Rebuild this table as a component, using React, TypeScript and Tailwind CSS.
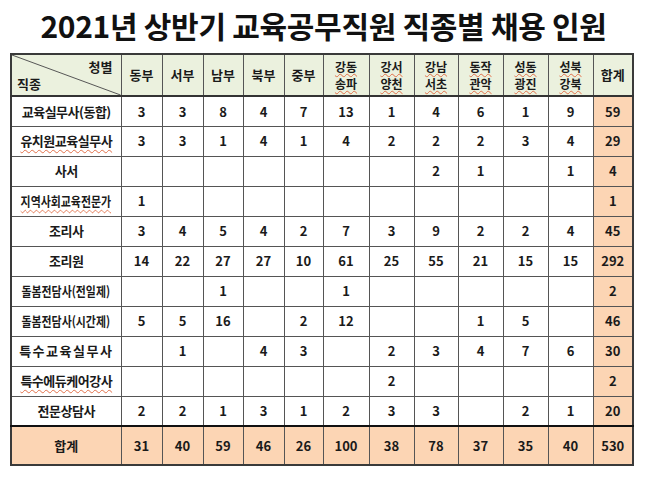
import React from "react";

const cols: string[][] = [
  ["동부"],
  ["서부"],
  ["남부"],
  ["북부"],
  ["중부"],
  ["강동", "송파"],
  ["강서", "양천"],
  ["강남", "서초"],
  ["동작", "관악"],
  ["성동", "광진"],
  ["성북", "강북"],
];

const widths = [110, 41, 41, 40, 41, 39, 46, 45, 44, 45, 45, 45, 40];

type Row = {
  label: string;
  kind: "normal" | "squiggle" | "narrow" | "narrowSquiggle" | "spaced";
  vals: (number | null)[];
  total: number;
};

const n = null;
const rows: Row[] = [
  { label: "교육실무사(동합)", kind: "normal", vals: [3, 3, 8, 4, 7, 13, 1, 4, 6, 1, 9], total: 59 },
  { label: "유치원교육실무사", kind: "squiggle", vals: [3, 3, 1, 4, 1, 4, 2, 2, 2, 3, 4], total: 29 },
  { label: "사서", kind: "normal", vals: [n, n, n, n, n, n, n, 2, 1, n, 1], total: 4 },
  { label: "지역사회교육전문가", kind: "narrowSquiggle", vals: [1, n, n, n, n, n, n, n, n, n, n], total: 1 },
  { label: "조리사", kind: "normal", vals: [3, 4, 5, 4, 2, 7, 3, 9, 2, 2, 4], total: 45 },
  { label: "조리원", kind: "normal", vals: [14, 22, 27, 27, 10, 61, 25, 55, 21, 15, 15], total: 292 },
  { label: "돌봄전담사(전일제)", kind: "narrow", vals: [n, n, 1, n, n, 1, n, n, n, n, n], total: 2 },
  { label: "돌봄전담사(시간제)", kind: "narrow", vals: [5, 5, 16, n, 2, 12, n, n, 1, 5, n], total: 46 },
  { label: "특수교육실무사", kind: "spaced", vals: [n, 1, n, 4, 3, n, 2, 3, 4, 7, 6], total: 30 },
  { label: "특수에듀케어강사", kind: "squiggle", vals: [n, n, n, n, n, n, 2, n, n, n, n], total: 2 },
  { label: "전문상담사", kind: "normal", vals: [2, 2, 1, 3, 1, 2, 3, 3, n, 2, 1], total: 20 },
];
const totals = [31, 40, 59, 46, 26, 100, 38, 78, 37, 35, 40];

const font = { fontFamily: '"Noto Sans CJK KR", "Noto Sans", sans-serif' };

function Label({ row }: { row: Row }) {
  if (row.kind === "squiggle") {
    return (
      <span className="underline decoration-wavy decoration-[#e0704a] decoration-1 underline-offset-[3px] tracking-[-0.5px]">
        {row.label}
      </span>
    );
  }
  if (row.kind === "narrowSquiggle") {
    return (
      <span className="inline-block scale-x-[0.84] whitespace-nowrap underline decoration-wavy decoration-[#e0704a] decoration-1 underline-offset-[3px]">
        {row.label}
      </span>
    );
  }
  if (row.kind === "narrow") {
    return <span className="inline-block scale-x-[0.84] whitespace-nowrap">{row.label}</span>;
  }
  if (row.kind === "spaced") {
    return <span className="tracking-[1.5px]">{row.label}</span>;
  }
  return <span className="tracking-[-0.5px]">{row.label}</span>;
}

export default function App() {
  return (
    <div className="w-[647px] h-[483px] bg-white text-[#1a1a1a]" style={font}>
      <div className="h-[48px] flex items-center justify-center pt-[2px]">
        <h1 className="text-[30px] font-bold tracking-[-0.3px] leading-none text-[#111]">
          2021년 상반기 교육공무직원 직종별 채용 인원
        </h1>
      </div>
      <div className="pl-[10px] pt-[5px]">
        <table className="table-fixed border-collapse border-2 border-[#3a3a3a] w-[622px] text-[13px] font-semibold">
          <colgroup>
            {widths.map((w, i) => (
              <col key={i} style={{ width: w }} />
            ))}
          </colgroup>
          <thead>
            <tr className="h-[40px] bg-[#ebf1de] border-b-2 border-[#333]">
              <td className="relative border border-[#555] p-0">
                <svg className="absolute inset-0 w-full h-full" viewBox="0 0 110 40" preserveAspectRatio="none">
                  <line x1="0" y1="0" x2="110" y2="40" stroke="#555" strokeWidth="1" />
                </svg>
                <div className="relative h-[40px]">
                  <span className="absolute right-[8px] top-[2px] text-[13px]">청별</span>
                  <span className="absolute left-[5px] bottom-[2px] text-[13px]">직종</span>
                </div>
              </td>
              {cols.map((c, i) => (
                <td key={i} className="border border-[#555] text-center p-0 align-middle">
                  {c.length === 1 ? (
                    <span>{c[0]}</span>
                  ) : (
                    <div className="flex flex-col items-center text-[12px] leading-[17.5px]">
                      {c.map((t, j) => (
                        <span
                          key={j}
                          className="underline decoration-wavy decoration-[#e0704a] decoration-1 underline-offset-[1px]"
                        >
                          {t}
                        </span>
                      ))}
                    </div>
                  )}
                </td>
              ))}
              <td className="border border-[#555] text-center p-0">합계</td>
            </tr>
          </thead>
          <tbody>
            {rows.map((r, i) => (
              <tr key={i} className="h-[30px]">
                <td className="border border-[#555] text-center p-0 whitespace-nowrap overflow-visible">
                  <Label row={r} />
                </td>
                {r.vals.map((v, j) => (
                  <td key={j} className="border border-[#555] text-center p-0">
                    {v ?? ""}
                  </td>
                ))}
                <td className="border border-[#555] border-l-[#222] text-center p-0 bg-[#fcd5b4]">{r.total}</td>
              </tr>
            ))}
            <tr className="h-[39px] bg-[#fcd5b4] border-t-2 border-[#111]">
              <td className="border border-[#555] border-t-2 border-t-[#111] text-center p-0">합계</td>
              {totals.map((v, j) => (
                <td key={j} className="border border-[#555] border-t-2 border-t-[#111] text-center p-0">
                  {v}
                </td>
              ))}
              <td className="border border-[#555] border-t-2 border-t-[#111] text-center p-0">530</td>
            </tr>
          </tbody>
        </table>
      </div>
    </div>
  );
}
